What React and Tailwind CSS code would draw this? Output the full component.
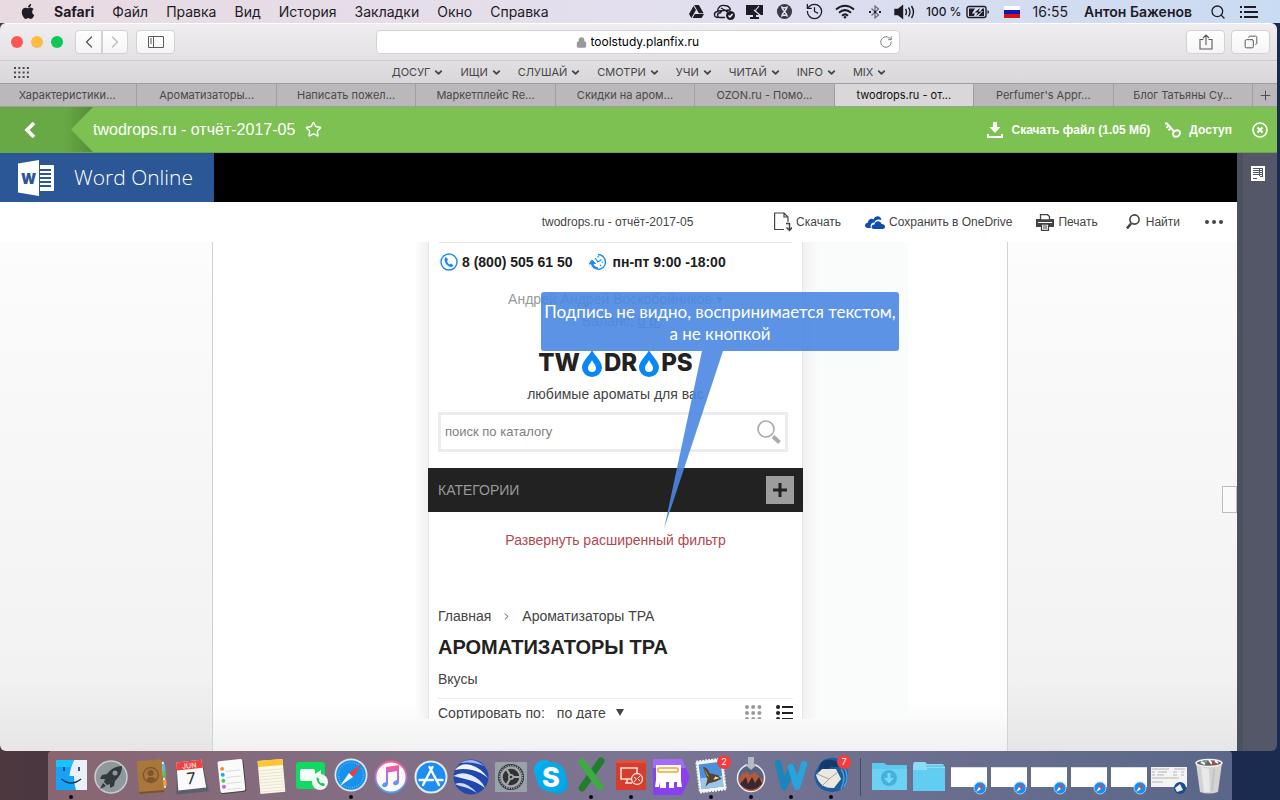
import React from "react";
import { ChevronDown, ChevronLeft, ChevronRight, Copy, History, Lock, Plus, RotateCw, Search, Share, Star } from "lucide-react";
import { FaApple, FaGoogleDrive } from "react-icons/fa";

const menus = ["Файл", "Правка", "Вид", "История", "Закладки", "Окно", "Справка"];

const bookmarks = ["ДОСУГ", "ИЩИ", "СЛУШАЙ", "СМОТРИ", "УЧИ", "ЧИТАЙ", "INFO", "MIX"];

const tabs = [
  "Характеристики...",
  "Ароматизаторы...",
  "Написать пожел...",
  "Маркетплейс Re...",
  "Скидки на аром...",
  "OZON.ru - Помо...",
  "twodrops.ru - от...",
  "Perfumer's Appr...",
  "Блог Татьяны Су...",
];

function StatusCell({ children }) {
  return <span className="flex w-[30px] justify-center">{children}</span>;
}

function MenuBar() {
  return (
    <header className="flex h-[23px] shrink-0 items-center bg-linear-to-r from-[#e9dae1] via-[#e3dfee] to-[#c9dbf2] pr-[22px] pl-5 text-sm text-[#1f1b26]">
      <FaApple className="mr-[18px] h-[17px] w-4" />
      <nav className="flex items-center gap-[18px]">
        <a href="#" className="font-bold">Safari</a>
        {menus.map((m) => (
          <a key={m} href="#">{m}</a>
        ))}
      </nav>
      <div className="ml-auto flex items-center">
        <span className="flex w-[26px] justify-center">
          <FaGoogleDrive className="h-[15px] w-[15px]" />
        </span>
        <StatusCell>
          <svg viewBox="0 0 24 18" className="h-[18px] w-6" fill="none" stroke="#1f1b26" strokeWidth="1.4">
            <path d="M5.500 14.500C0 14.500 .5 9 4.500 8.500C4.500 4 8 2 11.500 2.500C15 2.500 17 5 17.500 7" />
            <path d="M12 14.500H7C3.500 14.500 4 9.500 7.500 9.800C8.500 6.500 13 6.500 14 9M5 8L17.500 7M8 5L15 9" />
            <circle cx="17.500" cy="12.500" r="4.500" fill="#1f1b26" stroke="none" />
            <path d="M15.500 12.500L17 14L19.500 11" stroke="#fff" />
          </svg>
        </StatusCell>
        <StatusCell>
          <svg viewBox="0 0 20 18" className="h-[18px] w-5">
            <path d="M1 2H18V12H1Z" fill="#1f1b26" />
            <path d="M8 12H11V14H14V16H5V14H8Z" fill="#1f1b26" />
            <path d="M9 7L16 13M10 8L14 3" stroke="#dfe1f0" strokeWidth="1.2" />
          </svg>
        </StatusCell>
        <StatusCell>
          <svg viewBox="0 0 18 18" className="h-[17px] w-[17px]">
            <circle cx="9" cy="9" r="8" fill="#3b3945" />
            <path d="M6 3.500C6 8 12 10 12 14.500M12 3.500C12 8 6 10 6 14.500M7 5H11M7 13H11" stroke="#dfe1f0" strokeWidth="1.500" fill="none" />
          </svg>
        </StatusCell>
        <StatusCell><History className="h-[19px] w-[19px]" strokeWidth={1.6} /></StatusCell>
        <StatusCell>
          <svg viewBox="0 0 20 15" className="h-[15px] w-5" fill="none" stroke="#1f1b26" strokeWidth="2">
            <path d="M1 5.500Q10-2 19 5.500M4 8.700Q10 3.500 16 8.700M7 11.800Q10 9 13 11.800" />
            <circle cx="10" cy="13.300" r="1.200" fill="#1f1b26" stroke="none" />
          </svg>
        </StatusCell>
        <StatusCell>
          <svg viewBox="0 0 14 16" className="h-4 w-3.5" fill="none" stroke="#6b6a7a" strokeWidth="1.2">
            <path d="M3.500 4.500L10.500 11L7 14V2L10.500 5L3.500 11.500" />
            <path d="M1 8H3M6 8H8M11 8H13" stroke="#1f1b26" strokeWidth="2" />
          </svg>
        </StatusCell>
        <StatusCell>
          <svg viewBox="0 0 22 16" className="h-4 w-[22px]" fill="none" stroke="#1f1b26" strokeWidth="1.400">
            <path d="M1 5.500H4L8.500 2V14L4 10.500H1Z" fill="#1f1b26" />
            <path d="M11.500 5Q13.500 8 11.500 11M14.500 3.500Q17.500 8 14.500 12.500M17.500 2Q21.500 8 17.500 14" />
          </svg>
        </StatusCell>
        <span className="ml-[6px] text-xs font-medium">100 %</span>
        <svg viewBox="0 0 24 14" className="ml-1 h-3.5 w-6">
          <rect x="1" y="1.500" width="19" height="11" rx="2" fill="none" stroke="#1f1b26" strokeWidth="1.400" />
          <path d="M3 3.500H9L6 8.500H9L8 11H3ZM14 3L8.500 7.500H12L10 11L16 6.500H12.500ZM18 3.500H16.500L14.500 6H17L12.500 11H18Z" fill="#1f1b26" />
          <path d="M21.500 5V9Q23 8.500 23 7T21.500 5" fill="#1f1b26" />
        </svg>
        <svg viewBox="0 0 16 12" className="ml-[14px] h-3 w-4">
          <path d="M0 0H16V4H0Z" fill="#fff" />
          <path d="M0 4H16V8H0Z" fill="#1414b8" />
          <path d="M0 8H16V12H0Z" fill="#d01414" />
        </svg>
        <span className="ml-[13px]">16:55</span>
        <span className="ml-4 font-semibold">Антон Баженов</span>
        <Search className="ml-[18px] h-4 w-4" strokeWidth={2} />
        <svg viewBox="0 0 18 14" className="ml-[14px] h-3.5 w-[18px]">
          <path d="M0 2H2M0 7H2M0 12H2M4 2H16M4 7H18M4 12H18" stroke="#1f1b26" strokeWidth="2.200" />
        </svg>
      </div>
    </header>
  );
}

const toolBtn =
  "flex h-6 items-center justify-center border border-[#d3d1d3] bg-linear-to-b from-white to-[#f6f5f6] text-[#5a5a5a]";

function Toolbar() {
  return (
    <div className="flex h-[37px] items-center border-t border-white bg-linear-to-b from-[#efedef] to-[#e3e1e3] pr-[7px] pl-[11px]">
      <div className="flex w-[365px] items-center">
        <div className="mr-3 flex gap-2">
          <span className="h-3 w-3 rounded-full bg-[#fc5753]" />
          <span className="h-3 w-3 rounded-full bg-[#fdbc40]" />
          <span className="h-3 w-3 rounded-full bg-[#0cc956]" />
        </div>
        <button aria-label="Назад" className={`${toolBtn} w-[27px] rounded-l`}>
          <ChevronLeft className="h-5 w-5" strokeWidth={1.6} />
        </button>
        <button aria-label="Вперёд" className={`${toolBtn} w-[26px] rounded-r`}>
          <ChevronRight className="h-5 w-5 text-[#bdbdbd]" strokeWidth={1.6} />
        </button>
        <button aria-label="Боковое меню" className={`${toolBtn} ml-2 w-[39px] rounded`}>
          <svg viewBox="0 0 16 12" className="h-3 w-4" fill="none" stroke="#5a5a5a">
            <path d="M.5 .5H15.500V11.500H.5ZM5.500 .5V11.500M2 3H4M2 5H4M2 7H4" />
          </svg>
        </button>
      </div>
      <label className="relative flex h-6 flex-1 items-center justify-center rounded border border-[#d3d1d3] bg-white">
        <Lock className="mr-1 h-[11px] w-[11px] fill-[#999] text-[#999]" strokeWidth={2.5} />
        <input
          aria-label="Адрес"
          defaultValue="toolstudy.planfix.ru"
          className="w-[110px] bg-transparent text-xs text-black outline-none"
        />
        <RotateCw className="absolute right-1.5 h-3.5 w-3.5 text-[#777]" strokeWidth={1.6} />
      </label>
      <div className="flex w-[370px] justify-end gap-1.5">
        <button aria-label="Поделиться" className={`${toolBtn} w-[39px] rounded`}>
          <svg viewBox="0 0 14 16" className="h-4 w-3.5" fill="none" stroke="#5a5a5a" strokeWidth="1.100">
            <path d="M4.500 5.500H1V15H13V5.500H9.500M7 11V1.200M4 4L7 1L10 4" />
          </svg>
        </button>
        <button aria-label="Вкладки" className={`${toolBtn} w-[39px] rounded`}>
          <Copy className="h-3.5 w-3.5 -scale-x-100" strokeWidth={1.7} />
        </button>
      </div>
    </div>
  );
}

function BookmarksBar() {
  return (
    <div className="flex h-[23px] items-center border-t border-[#cbc9cb] bg-linear-to-b from-[#e1dfe1] to-[#d9d7d9] px-3.5 text-[#464648]">
      <svg viewBox="0 0 15 11" className="h-[11px] w-[15px]">
        <path d="M0 1H15M0 5.500H15M0 10H15" stroke="#4a4a4c" strokeWidth="2" strokeDasharray="2 2.300" />
      </svg>
      <nav className="mr-[13px] flex flex-1 justify-center gap-4 text-[11px]">
        {bookmarks.map((b) => (
          <a key={b} href="#" className="flex items-center gap-[3px]">
            {b}
            <ChevronDown className="h-[11px] w-[11px]" strokeWidth={4} />
          </a>
        ))}
      </nav>
    </div>
  );
}

function TabBar() {
  return (
    <div className="flex h-6 border-y border-[#9f9d9f] bg-[#bab8bb] text-[11px] text-[#4a484c]">
      <div className="-ml-0.5 flex flex-1">
        {tabs.map((t, idx) => (
          <button
            key={t}
            className={`flex-1 border-r border-[#a19fa1] ${idx === 6 ? "bg-[#d9d7d9] text-[#111]" : ""}`}
          >
            {t}
          </button>
        ))}
      </div>
      <button aria-label="Новая вкладка" className="flex w-6 items-center justify-center">
        <Plus className="h-[15px] w-[15px]" strokeWidth={1.5} />
      </button>
    </div>
  );
}

function FileHeader() {
  return (
    <div className="flex h-[46px] items-center border-b border-[#69a846] bg-[#7dc152] pr-[9px] font-['Liberation_Sans',Arial,sans-serif] text-white">
      <button aria-label="К списку" className="h-[45px] w-[93px]">
        <svg viewBox="0 0 93 45" className="h-[45px] w-[93px]">
          <defs>
            <linearGradient id="fold">
              <stop offset="0.7" stopColor="#68a845" />
              <stop offset="1" stopColor="#558c38" />
            </linearGradient>
          </defs>
          <path d="M0 0H93L71 22.500L93 45H0Z" fill="url(#fold)" />
          <path d="M34 16L27 23L34 30" fill="none" stroke="#fff" strokeWidth="3.600" />
        </svg>
      </button>
      <h1 className="text-base">twodrops.ru - отчёт-2017-05</h1>
      <button aria-label="В избранное" className="ml-2.5">
        <Star className="h-[17px] w-[17px]" strokeWidth={2} />
      </button>
      <div className="ml-auto flex items-center text-xs font-bold">
        <a href="#" className="flex items-center gap-2">
          <svg viewBox="0 0 16 16" className="h-4 w-4" fill="#fff">
            <path d="M6 0H10V5H13.500L8 11L2.500 5H6Z" />
            <path d="M0 12H2V14H14V12H16V16H0Z" />
          </svg>
          Скачать файл (1.05 Мб)
        </a>
        <a href="#" className="ml-[15px] flex items-center gap-2">
          <svg viewBox="0 0 16 16" className="h-4 w-4" fill="none" stroke="#fff" strokeWidth="2">
            <path d="M0 1.500H2L8.500 9M3.500 3.500L1.500 6M5.500 6L3.500 8.500" />
            <ellipse cx="11.500" cy="11.500" rx="3.600" ry="3" transform="rotate(-35 11.500 11.500)" />
          </svg>
          Доступ
        </a>
        <button aria-label="Закрыть" className="ml-5">
          <svg viewBox="0 0 16 16" className="h-4 w-4" fill="none" stroke="#fff" strokeWidth="2">
            <circle cx="8" cy="8" r="7" strokeWidth="1.600" />
            <path d="M5.500 5.500L10.500 10.500M10.500 5.500L5.500 10.500" />
          </svg>
        </button>
      </div>
    </div>
  );
}

function WordBar() {
  return (
    <div className="flex h-[49px] bg-black">
      <div className="flex w-[214px] items-center bg-[#2b5797] pl-[18px] text-white">
        <svg viewBox="0 0 36 36" className="h-9 w-9">
          <path d="M0 3.500L21 0V36L0 32.500Z" fill="#fff" />
          <path d="M22 5H35Q36 5 36 6V30Q36 31 35 31H22Z" fill="#fff" />
          <path d="M22 10H33M22 14H33M22 18H33M22 22H33M22 26H33" stroke="#2b5797" strokeWidth="2" />
          <text x="10.500" y="23.500" textAnchor="middle" fontSize="14" fontWeight="900" fill="#2b5797">W</text>
        </svg>
        <span className="ml-5 font-['Open_Sans',sans-serif] text-[21px] font-light">Word Online</span>
      </div>
    </div>
  );
}

function WordToolbar() {
  return (
    <div className="grid h-10 grid-cols-[1fr_auto_1fr] items-center bg-white pr-3.5 font-['Liberation_Sans',Arial,sans-serif] text-xs text-[#444]">
      <span className="col-start-2 pl-3">twodrops.ru - отчёт-2017-05</span>
      <div className="flex items-center justify-end whitespace-nowrap">
        <button className="flex items-center gap-1">
          <svg viewBox="0 0 18 20" className="h-5 w-[18px]" fill="none" stroke="#444" strokeWidth="1.200">
            <path d="M10 17.500H.6V1H10L14 5V10M10 1V5H14" />
            <path d="M12 11.500H15.500V18M12.500 15.500L15.500 18.500L18 15.500" strokeWidth="1.500" />
          </svg>
          Скачать
        </button>
        <button className="ml-6 flex items-center gap-1">
          <svg viewBox="0 0 20 13" className="h-[13px] w-5" fill="#0f4eb0">
            <path d="M3 12C-1 12-1 7 3 6.500C3 3 7 2 8.500 3.500C10-1 16-1 16.500 4C13 2.500 10 4 9.500 6.500C6 6.500 5 9.500 6 12Z" />
            <path d="M9 13C5.500 13 6 8.500 9.500 8.500C10 4.500 15.500 4 16.500 8C21 8 21 13 17.500 13Z" />
          </svg>
          Сохранить в OneDrive
        </button>
        <button className="ml-6 flex items-center gap-1">
          <svg viewBox="0 0 18 17" className="h-[17px] w-[18px]">
            <path d="M0 5H18V13H0Z" fill="#444" />
            <path d="M4.500 6V.7H11.500L13.500 2.500V6ZM5.500 10H12.500V16.300H5.500Z" fill="#fff" stroke="#444" strokeWidth="1.300" />
            <path d="M7 12H11M7 14H11" stroke="#444" />
            <path d="M2 8.500H16" stroke="#fff" strokeWidth="1" />
          </svg>
          Печать
        </button>
        <button className="ml-7 flex items-center gap-1.5">
          <svg viewBox="0 0 14 16" className="h-4 w-3.5" fill="none" stroke="#444">
            <circle cx="8.500" cy="5.500" r="4.600" strokeWidth="1.600" />
            <path d="M5 9.500L1 14.500" strokeWidth="2.600" />
          </svg>
          Найти
        </button>
        <button aria-label="Ещё" className="ml-[25px]">
          <svg viewBox="0 0 18 4" className="h-1 w-[18px]" fill="#444">
            <circle cx="2" cy="2" r="2" />
            <circle cx="9" cy="2" r="2" />
            <circle cx="16" cy="2" r="2" />
          </svg>
        </button>
      </div>
    </div>
  );
}

function Drop() {
  return (
    <svg viewBox="0 0 20 27" className="mx-0.5 h-[27px] w-5">
      <path d="M10 0C12 5 20 11 20 17.500A10 9.500 0 0 1 0 17.500C0 11 8 5 10 0Z" fill="#0a86f5" />
      <path d="M10 10C11 13 14 15 14 18A4 4 0 0 1 6 18C6 15 9 13 10 10Z" fill="#fff" />
    </svg>
  );
}

function Shop() {
  return (
    <div className="w-[375px] border-x border-[#e6e6e6] bg-white text-sm leading-[22px] text-[#444]">
      <div className="mx-2.5 flex h-[38px] items-center border-t border-[#e4e4e4] font-bold text-[#1c1c1c]">
        <svg viewBox="0 0 18 18" className="ml-px h-[18px] w-[18px]">
          <circle cx="9" cy="9" r="8" fill="#fff" stroke="#1a8cf0" strokeWidth="1.400" />
          <path d="M6 4C3.500 5.500 4.500 9.500 7 12C9.500 14.500 13 14.500 13.500 12.500L11 10.500L9.500 11.500C8.500 11 7.500 9.500 7 8L8.200 6.800Z" fill="#1a8cf0" />
        </svg>
        <span className="ml-1">8 (800) 505 61 50</span>
        <svg viewBox="0 0 18 18" className="ml-4 h-[18px] w-[18px]" fill="none" stroke="#1a8cf0">
          <path d="M9 1.500A7.500 7.500 0 0 1 9 16.500" strokeWidth="1.400" />
          <path d="M9 15.500Q4.500 15.500 3 10.500" strokeWidth="2.600" />
          <path d="M0 11L3 7L6.500 10.500Z" fill="#1a8cf0" />
          <path d="M6 5L9 9L12.500 6.500M9 3V4.500M14 9H12.500M12 13L11 12" strokeWidth="1.200" />
        </svg>
        <span className="ml-1.5">пн-пт 9:00 -18:00</span>
      </div>
      <div className="mt-2 text-center text-[#999]">
        <p>Андрей Андрей Воскобойников ▾</p>
        <p className="pl-3">Баланс: <a href="#" className="underline">0 р.</a></p>
      </div>
      <div className="mt-4 flex h-[30px] items-center justify-center font-[Inter,sans-serif] text-2xl font-extrabold text-[#222]">
        TW<Drop />DR<Drop />PS
      </div>
      <p className="mt-[5px] text-center">любимые ароматы для вас</p>
      <label className="mx-[9px] mt-[7px] mr-3.5 flex h-10 items-center border-3 border-[#ececec] px-1">
        <input
          aria-label="Поиск"
          placeholder="поиск по каталогу"
          className="min-w-0 flex-1 text-[13px] placeholder-[#808080] outline-none"
        />
        <svg viewBox="0 0 24 24" className="h-6 w-6" fill="none" stroke="#aaa">
          <circle cx="9" cy="9" r="8" strokeWidth="1.600" />
          <path d="M16 16.500L22.500 22.500" strokeWidth="4" />
        </svg>
      </label>
      <div className="-mx-px mt-4 flex h-11 items-center justify-between bg-[#222] pr-[9px] pl-2.5 text-[#999]">
        КАТЕГОРИИ
        <button aria-label="Развернуть" className="flex h-7 w-7 items-center justify-center bg-[#9d9d9d] text-[#222]">
          <svg viewBox="0 0 14 14" className="h-3.5 w-3.5">
            <path d="M7 0V14M0 7H14" stroke="#222" strokeWidth="3" />
          </svg>
        </button>
      </div>
      <p className="mt-[17px] text-center">
        <a href="#" className="text-[#b5474f]">Развернуть расширенный фильтр</a>
      </p>
      <nav className="mt-[54px] flex items-center px-[9px]">
        <a href="#">Главная</a>
        <ChevronRight className="mx-2.5 h-[11px] w-[11px]" />
        <a href="#">Ароматизаторы TPA</a>
      </nav>
      <h2 className="mt-[5px] px-[9px] text-xl leading-[30px] font-bold text-[#222]">АРОМАТИЗАТОРЫ TPA</h2>
      <p className="mt-1.5 px-[9px]">Вкусы</p>
      <div className="mx-[9px] mt-2 flex h-7 items-center border-t border-[#ececec]">
        <label htmlFor="sort">Сортировать по:</label>
        <select id="sort" className="ml-3 appearance-none">
          <option>по дате</option>
        </select>
        <svg viewBox="0 0 8 7" className="ml-2.5 h-[7px] w-2" fill="#444">
          <path d="M0 0H8L4 7Z" />
        </svg>
        <svg viewBox="0 0 17 16" className="ml-auto h-4 w-[17px]">
          <path d="M2 2H17M2 8H17M2 14H17" stroke="#999" strokeWidth="4" strokeLinecap="round" strokeDasharray="0 6.200" />
        </svg>
        <svg viewBox="0 0 17 16" className="ml-3.5 h-4 w-[17px]" stroke="#222">
          <path d="M2 2H2.100M2 8H2.100M2 14H2.100" strokeWidth="4" strokeLinecap="round" />
          <path d="M6 2H17M6 8H17M6 14H17" strokeWidth="2" />
        </svg>
      </div>
    </div>
  );
}

function Document() {
  return (
    <div className="relative flex min-h-0 flex-1 justify-center overflow-hidden bg-linear-to-b from-[#fcfcfc] via-[#f2f2f2] via-85% to-[#e6e6e6] pr-[17px]">
      <article className="w-[796px] border-x border-[#cdd3d8] bg-linear-to-b from-white from-90% to-[#f1f1f1] pl-[203px] font-['Liberation_Sans',Arial,sans-serif]">
        <div className="relative flex h-[477px] w-[492px] overflow-hidden bg-[#fafcfb]">
          <div className="w-3 bg-linear-to-r from-[#fcfcfc] to-[#f1f1f1]" />
          <Shop />
          <div className="w-4 bg-linear-to-r from-[#f1f1f1] to-[#fafcfb]" />
          <div className="absolute top-[50px] left-[125px] w-[358px] rounded-[3px] bg-[#4a87e2]/90 pt-[9px] pb-[6px] text-center font-[Lato,sans-serif] text-[17px] leading-[22px] whitespace-nowrap text-white">
            Подпись не видно, воспринимается текстом,
            <br />а не кнопкой
          </div>
          <svg viewBox="0 0 60 178" className="absolute top-[109px] left-[248px] h-[178px] w-[60px]">
            <path d="M38 0H59L0 178Z" fill="#4a87e2" fillOpacity=".9" />
          </svg>
        </div>
      </article>
      <button aria-label="Прокрутка" className="absolute top-[244px] right-0 h-[27px] w-[15px] border border-[#b9bec5] bg-[#fafafa]" />
    </div>
  );
}

function SafariBadge() {
  return (
    <g transform="translate(31 31)">
      <circle r="6" fill="#1b8df0" stroke="#9fc9ee" />
      <path d="M4-4L1 1L-1-1Z" fill="#f33" />
      <path d="M-4 4L1 1L-1-1Z" fill="#fff" />
    </g>
  );
}

function MiniWindow() {
  return (
    <>
      <path d="M2 10H38V30H2Z" fill="#fff" />
      <path d="M2 10H38V11H2Z" fill="#ddd" />
      <SafariBadge />
    </>
  );
}

const dockApps = [
  {
    name: "Finder",
    running: true,
    icon: (
      <>
        <path d="M5 5H36V35H5Z" fill="#e9f0f8" />
        <path d="M5 5H23Q19 13 18.500 21H23Q23 29 25 35H5Z" fill="#16a3f7" />
        <path d="M5 5H23L20 12H5Z" fill="#18c4fb" />
        <path d="M13 12V16M28 12V16M10.500 24Q20 32 30 24" fill="none" stroke="#173450" strokeWidth="1.600" />
      </>
    ),
  },
  {
    name: "Launchpad",
    icon: (
      <>
        <circle cx="20" cy="20" r="16" fill="#8f999c" stroke="#c9ced0" strokeWidth="1.500" />
        <path d="M31 9C24 9 19 13 16 17L11 18L9 22L14 22L13 25L16 28L19 27V31L23 29L24 24C28 20 31 16 31 9Z" fill="#34393e" />
        <path d="M12 26L9 32L15 29Z" fill="#34393e" />
        <circle cx="24" cy="16" r="2.500" fill="#8f999c" />
      </>
    ),
  },
  {
    name: "Contacts",
    icon: (
      <g transform="rotate(-5 20 20)">
        <path d="M30 6H34V32H30Z" fill="#eee" />
        <path d="M32 8H35V15H32Z" fill="#58b9e8" />
        <path d="M32 15H35V22H32Z" fill="#5ac05c" />
        <path d="M32 24H35V30H32Z" fill="#f59c33" />
        <rect x="7" y="3" width="25" height="33" rx="1.500" fill="#a9763c" />
        <path d="M7 34H32V36H7Z" fill="#7a5228" />
        <circle cx="20" cy="18" r="7.500" fill="none" stroke="#7f562b" strokeWidth="1.300" />
        <circle cx="20" cy="16" r="3" fill="#7f562b" />
        <path d="M15 23Q16 20 20 20T25 23Q20 27 15 23" fill="#7f562b" />
      </g>
    ),
  },
  {
    name: "Calendar",
    icon: (
      <g transform="rotate(-6 20 20)">
        <path d="M4 33L7 7H33L36 33V36H4Z" fill="#59606b" />
        <path d="M7 4H32L34 32H6Z" fill="#fafafa" />
        <path d="M7 4H32L32.500 12H6.500Z" fill="#f0413d" />
        <text x="19.500" y="11" textAnchor="middle" fontSize="7" fill="#fff">JUN</text>
        <text x="20" y="27" textAnchor="middle" fontSize="16" fill="#333">7</text>
      </g>
    ),
  },
  {
    name: "Reminders",
    icon: (
      <g transform="rotate(-6 20 20)">
        <rect x="8" y="4" width="26" height="32" rx="2" fill="#444" />
        <rect x="8" y="3" width="25" height="32" rx="2" fill="#fafafa" />
        <path d="M15 14H30M15 20H30M15 26H30M15 32H30" stroke="#ddd" />
        <circle cx="12" cy="11" r="2" fill="#ff8b23" />
        <circle cx="12" cy="17" r="2" fill="#23a8f5" />
        <circle cx="12" cy="23" r="2" fill="#48d044" />
        <circle cx="12" cy="29" r="2" fill="#c66ad9" />
      </g>
    ),
  },
  {
    name: "Notes",
    icon: (
      <g transform="rotate(-5 20 20)">
        <path d="M8 3H33V36H8Z" fill="#fbf8ec" />
        <path d="M8 3H33V9H8Z" fill="#fbc62f" />
        <path d="M8 13H33M8 16H33M8 19H33M8 22H33M8 25H33M8 28H33M8 31H33M8 34H33" stroke="#e6dfc6" strokeWidth=".8" />
      </g>
    ),
  },
  {
    name: "FaceTime",
    icon: (
      <>
        <rect x="5" y="5" width="29" height="27" rx="3" fill="#11d962" />
        <rect x="9" y="12" width="15" height="12" rx="2" fill="#f4fff8" />
        <path d="M24 17L30 13V24L24 20Z" fill="#f4fff8" />
        <circle cx="29" cy="25" r="8" fill="#f2f6f4" />
        <path d="M26 20C24 23 29 30 33 29L34 27L31 25.500L30 26.500L27.500 23.500L28.500 22.500Z" fill="#16c75a" />
      </>
    ),
  },
  {
    name: "Safari",
    running: true,
    icon: (
      <>
        <circle cx="20" cy="20" r="16.500" fill="#dfe6ec" />
        <circle cx="20" cy="20" r="14.800" fill="#1791ec" />
        <circle cx="20" cy="20" r="12.500" fill="none" stroke="#7fc2f5" strokeWidth="1.500" strokeDasharray=".6 1.600" />
        <path d="M31 9L22 22L18 18Z" fill="#f53a34" />
        <path d="M9 31L22 22L18 18Z" fill="#f3f3f3" />
      </>
    ),
  },
  {
    name: "iTunes",
    icon: (
      <>
        <defs>
          <linearGradient id="tune" x2="0" y2="1">
            <stop stopColor="#fb5d8c" />
            <stop offset=".5" stopColor="#b46fe0" />
            <stop offset="1" stopColor="#45a5f5" />
          </linearGradient>
        </defs>
        <circle cx="20" cy="20" r="15.500" fill="#fafafa" stroke="url(#tune)" strokeWidth="1.800" />
        <path d="M15 10L28 8V25Q27 29 23 28Q20 25 26 23V14L17 15.500V27Q16 31 12 30Q9 27 15 25Z" fill="url(#tune)" />
      </>
    ),
  },
  {
    name: "App Store",
    icon: (
      <>
        <circle cx="20" cy="20" r="15.500" fill="#1b8df3" stroke="#e4ebf2" strokeWidth="2" />
        <path d="M21.500 10L12 28M18.500 10L28 28M8.500 23H22M27 23H31.500" stroke="#fff" strokeWidth="2.400" strokeLinecap="round" />
      </>
    ),
  },
  {
    name: "Google Earth",
    icon: (
      <>
        <circle cx="20" cy="20" r="17.500" fill="#2348ad" />
        <path d="M4 13Q10 5 20 8T37 21Q30 15 21 13T4 13Z" fill="#f1f5ff" />
        <path d="M2.500 19Q10 14 20 18T34 31Q26 25 18 23T2.500 19Z" fill="#e4ebff" />
        <path d="M4 27Q14 23 26 36Q18 31 13 30T4 27Z" fill="#d2ddff" />
        <path d="M9 6Q22-1 33 9Q22 4 9 6Z" fill="#9cb9f5" />
      </>
    ),
  },
  {
    name: "Настройки",
    icon: (
      <>
        <rect x="4" y="5" width="32" height="30" rx="1" fill="#98a2a9" />
        <circle cx="20" cy="20" r="13" fill="#303236" />
        <circle cx="20" cy="20" r="11.500" fill="none" stroke="#a4a6a9" strokeWidth="1.500" strokeDasharray="1.200 1.200" />
        <circle cx="20" cy="20" r="9.500" fill="none" stroke="#a4a6a9" strokeWidth="2.400" />
        <path d="M20 20H29M20 20L15.500 12M20 20L15.500 28" stroke="#a4a6a9" strokeWidth="2.200" />
        <circle cx="20" cy="20" r="3" fill="#a4a6a9" />
        <circle cx="20" cy="20" r="1.300" fill="#303236" />
      </>
    ),
  },
  {
    name: "Skype",
    icon: (
      <>
        <circle cx="13" cy="13" r="10" fill="#05aff0" />
        <circle cx="27" cy="27" r="10" fill="#05a3e4" />
        <circle cx="20" cy="20" r="15" fill="#05aaeb" />
        <text x="20" y="29.500" textAnchor="middle" fontSize="27" fontWeight="800" fill="#fff">S</text>
      </>
    ),
  },
  {
    name: "Excel",
    running: true,
    icon: (
      <>
        <path d="M30 6L11 33" stroke="#1f7d2c" strokeWidth="7" strokeLinecap="round" />
        <path d="M11 7L29 32" stroke="#3faa45" strokeWidth="7" strokeLinecap="round" />
      </>
    ),
  },
  {
    name: "Remote Desktop",
    running: true,
    icon: (
      <>
        <path d="M5 5H35V35H5Z" fill="#d63d2c" />
        <path d="M5 5H35V8H5Z" fill="#dc5343" />
        <path d="M21 24H10V13H26V18M14 28H21M16 24V28" fill="none" stroke="#fbe4e0" strokeWidth="1.500" />
        <circle cx="26" cy="24" r="5.500" fill="none" stroke="#fbe4e0" strokeWidth="1.300" />
        <path d="M23 22L25.500 24L23 27M29 21L26.500 23.500L29 26" fill="none" stroke="#fbe4e0" />
      </>
    ),
  },
  {
    name: "Метро",
    icon: (
      <>
        <path d="M2 2H31L39 20L31 38H2Z" fill="#8a3ff0" />
        <path d="M2 2H31L35 11H2Z" fill="#a46bf8" />
        <path d="M5 8H30V24L31 30H26V25H23V31H18V25H15V31H9V25L8 30H4L5 23Z" fill="#fff" />
        <rect x="7" y="11" width="20" height="4" rx="1" fill="#fff" stroke="#f5a623" strokeWidth="1.500" />
      </>
    ),
  },
  {
    name: "Mail",
    running: true,
    badge: "2",
    icon: (
      <>
        <circle cx="29" cy="29" r="7" fill="#65718f" />
        <g transform="rotate(-7 20 20)">
          <path d="M7 5H33V36H7Z" fill="#f5f5f5" stroke="#f5f5f5" strokeWidth="2" strokeDasharray="2 1" />
          <path d="M9 8H31V33H9Z" fill="#4a90dc" />
          <path d="M9 22H31V33H9Z" fill="#9cc5ee" />
          <path d="M13 11Q17 11 19 18L27 21L30 25L24 27L17 28L13 31L16 24Z" fill="#59422e" />
          <path d="M14 12L18 22L16 20Z" fill="#c89648" />
          <path d="M24 22L28 24L22 25Z" fill="#f2e4c4" />
        </g>
      </>
    ),
  },
  {
    name: "macOS",
    running: true,
    icon: (
      <>
        <circle cx="20" cy="23" r="13.500" fill="#59617c" stroke="#eceef2" strokeWidth="1.500" />
        <path d="M7.500 25L11 19L16 17L19 20L24 17L32.500 26Q29 36 20 36T7.500 25Z" fill="#b45a3c" />
        <path d="M9 29L15 22L17 29L21 22L24 28L28 22L31 29Q20 40 9 29Z" fill="#3b2730" />
        <path d="M17 2H23V9H26.500L20 15L13.500 9H17Z" fill="#b4bcc3" />
      </>
    ),
  },
  {
    name: "Word",
    running: true,
    icon: (
      <>
        <path d="M7 8L13 32L21 12" fill="none" stroke="#1b86bd" strokeWidth="6.500" strokeLinecap="round" strokeLinejoin="round" />
        <path d="M20 12L26 32L33 9" fill="none" stroke="#2aa3dc" strokeWidth="6.500" strokeLinecap="round" strokeLinejoin="round" />
      </>
    ),
  },
  {
    name: "Thunderbird",
    running: true,
    badge: "7",
    icon: (
      <>
        <path d="M7 12Q12 1 25 3Q38 8 37 22Q35 37 20 37Q6 35 4 24Q2 20 7 12Z" fill="#1c5d9e" />
        <path d="M12 6Q24 2 31 12L20 12L8 20Q7 10 12 6Z" fill="#123a6b" />
        <path d="M30 14Q36 22 30 34M33 12Q39 22 33 32" stroke="#46a0dc" strokeWidth="1.500" fill="none" />
        <path d="M5 20L11 14L25 14L30 24L23 33Q9 34 5 20Z" fill="#ece8df" />
        <path d="M6 19L18 24L27 17M11 31L18 24" fill="none" stroke="#a9a396" />
      </>
    ),
  },
];

const dockFiles = [
  {
    name: "Загрузки",
    icon: (
      <>
        <path d="M3 6H15L18 8H38V33H3Z" fill="#5bc8ee" />
        <path d="M3 12H38V33H3Z" fill="#6cd2f4" />
        <circle cx="20" cy="21" r="8" fill="#45b0da" />
        <path d="M18.500 16H21.500V21H25L20 26.500L15 21H18.500Z" fill="#79d8f7" />
      </>
    ),
  },
  {
    name: "Документы",
    icon: (
      <>
        <path d="M5 5H16L18 7H34L36 10V33H4V8Z" fill="#8adcf7" />
        <path d="M17 9H35M18 12H36" stroke="#49b5dd" />
        <path d="M4 13H36V34H4Z" fill="#62cdf3" />
      </>
    ),
  },
  { name: "Окно 1", icon: <MiniWindow /> },
  { name: "Окно 2", icon: <MiniWindow /> },
  { name: "Окно 3", icon: <MiniWindow /> },
  { name: "Окно 4", icon: <MiniWindow /> },
  { name: "Окно 5", icon: <MiniWindow /> },
  {
    name: "Окно почты",
    icon: (
      <>
        <path d="M2 10H38V30H2Z" fill="#f4f4f4" />
        <path d="M3 12H20M25 12H36M3 15H6M9 15H18M24 15H28M32 15H35M3 18H6M8 18H15M24 18H28M32 18H35M3 21H30M3 25H14" stroke="#b5b5b9" />
        <circle cx="31" cy="31" r="6" fill="#164f8e" />
        <path d="M26 31L31 27L34 33L28 35Z" fill="#f1eee8" />
      </>
    ),
  },
  {
    name: "Корзина",
    icon: (
      <>
        <path d="M7 6L11 35Q20 38 29 35L33 6Z" fill="#d3d3d3" />
        <path d="M12 10L15 35H21L20 12Z" fill="#e9e9e9" />
        <path d="M25 12L23 34" stroke="#c4c4c4" strokeWidth="2" />
        <ellipse cx="20" cy="6" rx="13" ry="3.500" fill="#67615f" stroke="#f1f1f1" strokeWidth="1.500" />
        <path d="M12 5L16 7M20 3L23 7M26 4L29 6" stroke="#fff" strokeWidth="2" />
        <path d="M15 4L18 5" stroke="#4cb8b0" strokeWidth="2" />
        <path d="M23 6L26 7" stroke="#c44030" strokeWidth="2" />
      </>
    ),
  },
];

function DockItem({ item }) {
  return (
    <button aria-label={item.name} className="relative h-[45px] w-10">
      <svg viewBox="0 0 40 40" className="h-10 w-10">{item.icon}</svg>
      {item.badge && (
        <span className="absolute top-px right-0 flex h-3.5 w-3.5 items-center justify-center rounded-full bg-[#f43b3e] text-[9px] text-white">
          {item.badge}
        </span>
      )}
      {item.running && <span className="mx-auto block h-1 w-1 rounded-full bg-[#0d0a18]" />}
    </button>
  );
}

function Dock() {
  return (
    <footer className="mx-auto flex h-[49px] shrink-0 rounded-t bg-linear-to-r from-[#896570] via-[#7a7594] to-[#5a6789] px-[3px] pt-[3px]">
      {dockApps.map((item) => (
        <DockItem key={item.name} item={item} />
      ))}
      <div className="mx-2 my-1 flex w-0.5 justify-center">
        <div className="w-px bg-[#3f4968]" />
      </div>
      {dockFiles.map((item) => (
        <DockItem key={item.name} item={item} />
      ))}
    </footer>
  );
}

function App() {
  return (
    <div className="flex h-screen flex-col overflow-hidden bg-linear-to-r from-[#4d3840] via-[#2b2a3d] to-[#1a2b50] font-[Inter,sans-serif]">
      <MenuBar />
      <main className="mr-[3px] flex min-h-0 flex-1 flex-col overflow-hidden rounded-md">
        <Toolbar />
        <BookmarksBar />
        <TabBar />
        <FileHeader />
        <div className="flex min-h-0 flex-1">
          <div className="flex min-w-0 flex-1 flex-col">
            <WordBar />
            <WordToolbar />
            <Document />
          </div>
          <aside className="w-10 border-l-6 border-[#4b5161] bg-[#545767] pt-[13px] pl-2">
            <button aria-label="Комментарии" className="block">
              <svg viewBox="0 0 14 15" className="h-[15px] w-3.5">
                <path d="M0 0H14V15H0Z" fill="#fff" />
                <path d="M2 2.500H12M2 4.500H12M2 6.500H12M2 8.500H12M8.500 2V10M11.500 2V10M9 10.500H12M2 12.500H6" stroke="#545767" fill="none" />
              </svg>
            </button>
          </aside>
        </div>
      </main>
      <Dock />
    </div>
  );
}

export default App;
